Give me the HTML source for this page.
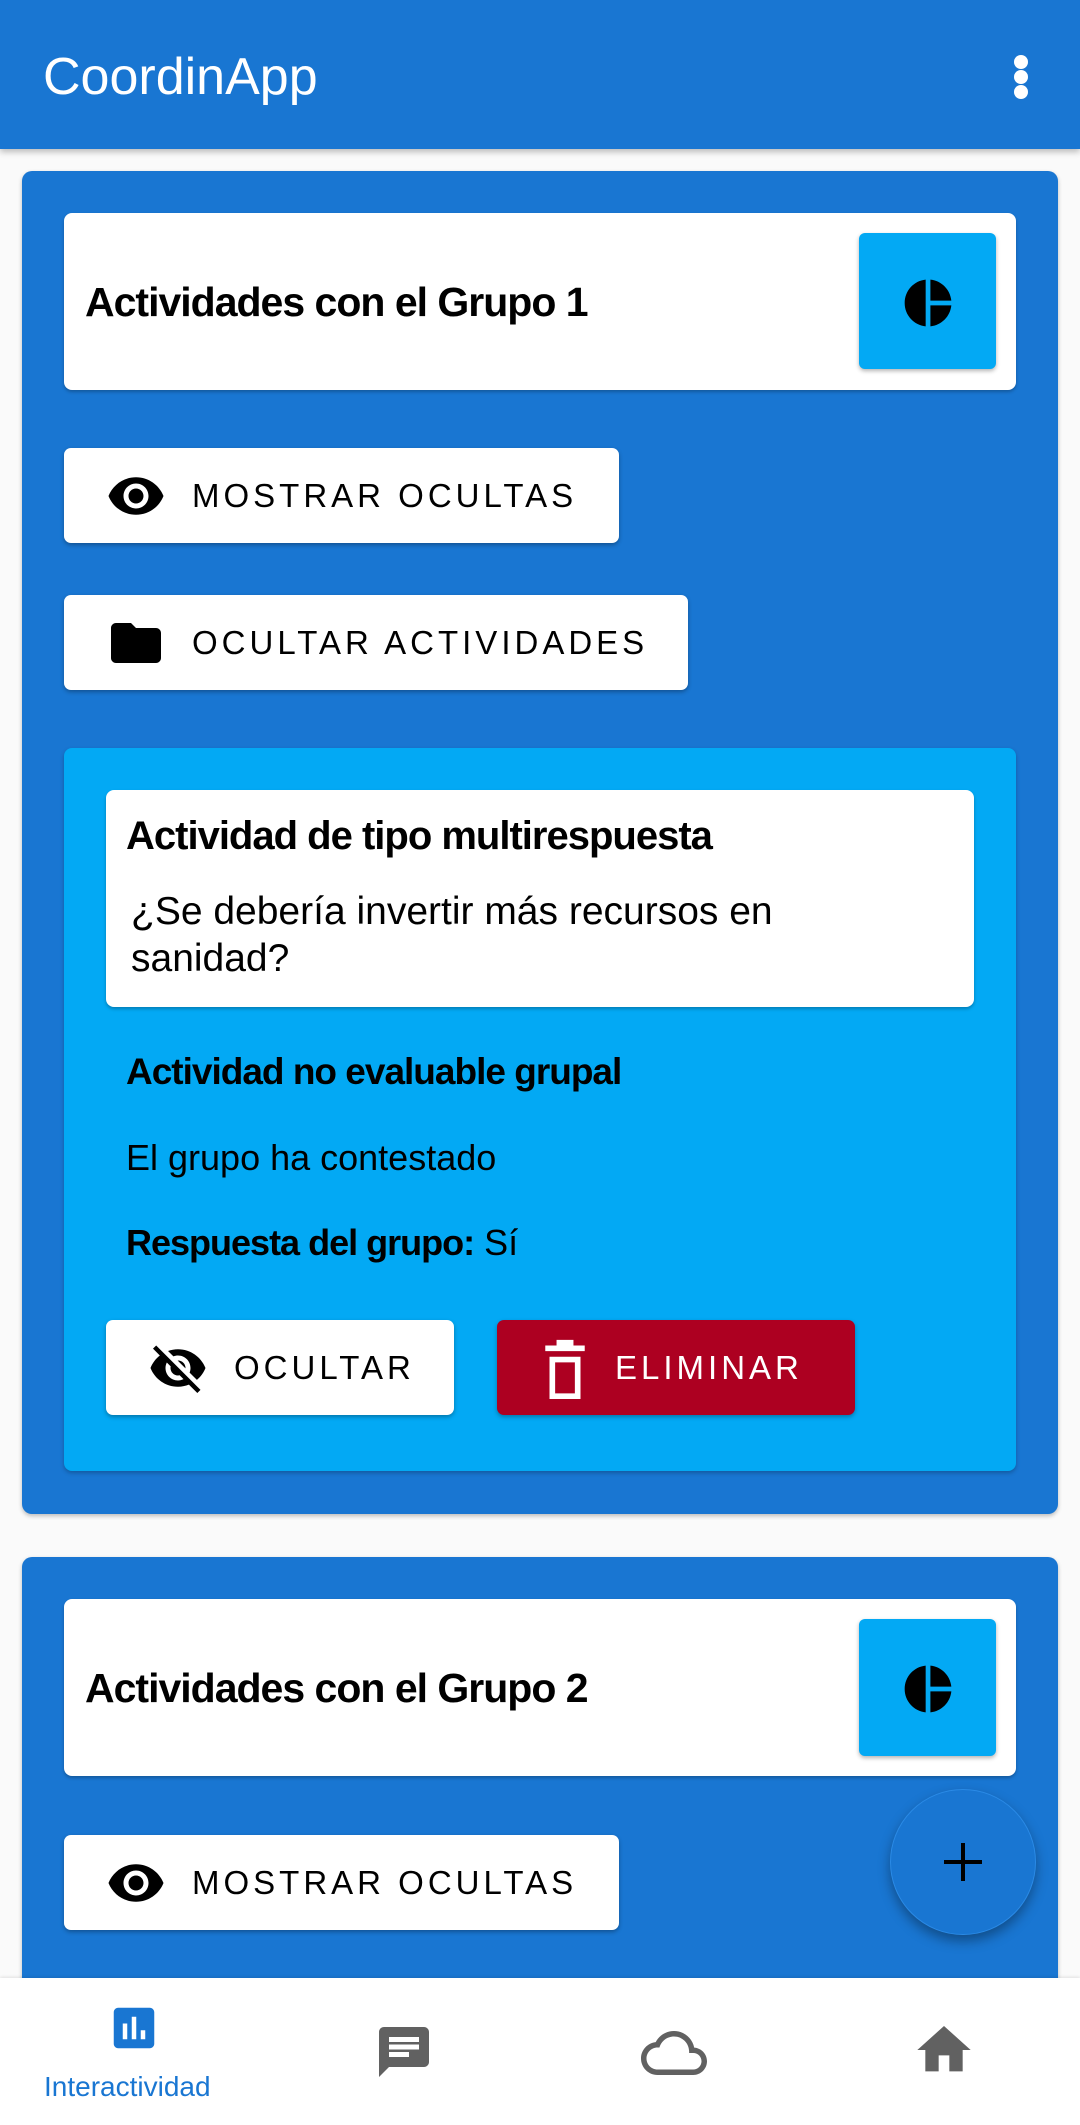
<!DOCTYPE html>
<html style="overflow:hidden;height:2125px"><head><meta charset="utf-8"><style>
*{margin:0;padding:0;box-sizing:border-box}
body{width:1080px;height:2125px;background:#fafafa;font-family:"Liberation Sans",sans-serif;position:relative;overflow:hidden;color:#000}
.a{position:absolute}
.bar{left:0;top:0;width:1080px;height:149px;background:#1976D2;box-shadow:0 3px 6px rgba(0,0,0,.25)}
.card{background:#1976D2;border-radius:10px;box-shadow:0 2px 4px rgba(0,0,0,.25)}
.white{background:#fff;border-radius:8px;box-shadow:0 2px 3px rgba(0,0,0,.25)}
.sq{background:#03A9F4;border-radius:6px;box-shadow:0 2px 4px rgba(0,0,0,.3)}
.btn{background:#fff;border-radius:7px;box-shadow:0 2px 4px rgba(0,0,0,.3);display:flex;align-items:center;font-size:33px;letter-spacing:4px}
.t{white-space:nowrap}
</style></head><body>
<div class="a bar"></div>
<div class="a t" style="left:43px;top:47px;font-size:52px;color:#fff;line-height:60px">CoordinApp</div>
<div class="a" style="left:1014px;top:55px;width:14px;height:14px;border-radius:50%;background:#fff"></div>
<div class="a" style="left:1014px;top:70px;width:14px;height:14px;border-radius:50%;background:#fff"></div>
<div class="a" style="left:1014px;top:85px;width:14px;height:14px;border-radius:50%;background:#fff"></div>

<!-- card 1 -->
<div class="a card" style="left:22px;top:171px;width:1036px;height:1343px"></div>
<div class="a white" style="left:64px;top:213px;width:952px;height:177px"></div>
<div class="a t" style="left:85px;top:280px;font-size:41px;font-weight:bold;line-height:44px;letter-spacing:-1px">Actividades con el Grupo 1</div>
<div class="a sq" style="left:859px;top:233px;width:137px;height:136px"></div>
<svg class="a" style="left:900px;top:275px" width="56" height="56" viewBox="0 0 24 24"><path d="M11 2v20c-5.07-.5-9-4.79-9-10s3.93-9.5 9-10zm2.03 0v8.99H22c-.47-4.74-4.24-8.52-8.97-8.99zm0 11.01V22c4.74-.47 8.5-4.25 8.97-8.99h-8.97z"/></svg>

<div class="a btn" style="left:64px;top:448px;width:555px;height:95px"><svg style="margin-left:42px;margin-right:26px" width="60" height="60" viewBox="0 0 24 24"><path d="M12 4.5C7 4.5 2.730 7.61 1 12c1.73 4.39 6 7.5 11 7.5s9.27-3.11 11-7.5c-1.73-4.390-6-7.5-11-7.5zM12 17c-2.76 0-5-2.24-5-5s2.24-5 5-5 5 2.24 5 5-2.24 5-5 5zm0-8c-1.66 0-3 1.34-3 3s1.34 3 3 3 3-1.34 3-3-1.34-3-3-3z"/></svg>MOSTRAR OCULTAS</div>
<div class="a btn" style="left:64px;top:595px;width:624px;height:95px"><svg style="margin-left:42px;margin-right:26px" width="60" height="60" viewBox="0 0 24 24"><path d="M10 4H4c-1.1 0-2 .9-2 2v12c0 1.1.9 2 2 2h16c1.1 0 2-.9 2-2V8c0-1.1-.9-2-2-2h-8l-2-2z"/></svg>OCULTAR ACTIVIDADES</div>

<div class="a" style="left:64px;top:748px;width:952px;height:723px;background:#03A9F4;border-radius:8px;box-shadow:0 2px 4px rgba(0,0,0,.25)"></div>
<div class="a white" style="left:106px;top:790px;width:868px;height:217px"></div>
<div class="a t" style="left:126px;top:814px;font-size:40px;font-weight:bold;line-height:44px;letter-spacing:-1px">Actividad de tipo multirespuesta</div>
<div class="a" style="left:131px;top:888px;font-size:39px;line-height:47px;width:700px">¿Se debería invertir más recursos en sanidad?</div>
<div class="a t" style="left:126px;top:1050px;font-size:37px;font-weight:bold;line-height:44px;letter-spacing:-1px">Actividad no evaluable grupal</div>
<div class="a t" style="left:126px;top:1136px;font-size:36px;line-height:44px">El grupo ha contestado</div>
<div class="a t" style="left:126px;top:1221px;font-size:36px;line-height:44px"><b style="letter-spacing:-1px">Respuesta del grupo:</b> Sí</div>

<div class="a btn" style="left:106px;top:1320px;width:348px;height:95px"><svg style="margin-left:42px;margin-right:26px" width="60" height="60" viewBox="0 0 24 24"><path d="M12 7c2.76 0 5 2.24 5 5 0 .65-.13 1.26-.36 1.83l2.92 2.92c1.51-1.26 2.7-2.89 3.43-4.750-1.73-4.39-6-7.5-11-7.5-1.4 0-2.74.25-3.98.7l2.16 2.16C10.74 7.13 11.35 7 12 7zM2 4.27l2.28 2.28.46.46C3.08 8.3 1.78 10.02 1 12c1.73 4.39 6 7.5 11 7.5 1.55 0 3.03-.3 4.38-.84l.42.42L19.73 22 21 20.73 3.27 3 2 4.27zM7.53 9.8l1.55 1.55c-.05.21-.08.43-.08.65 0 1.66 1.34 3 3 3 .22 0 .44-.03.65-.08l1.55 1.55c-.67.33-1.41.53-2.2.53-2.76 0-5-2.24-5-5 0-.79.2-1.53.53-2.2zm4.31-.78l3.15 3.15.02-.16c0-1.66-1.34-3-3-3l-.17.01z"/></svg>OCULTAR</div>
<div class="a btn" style="left:497px;top:1320px;width:358px;height:95px;background:#AD0021;color:#fff"><svg style="margin-left:48px;margin-right:30px" width="40" height="62" viewBox="0 0 14 22"><path d="M4 1h6v2h4v2H0V3h4z M1.5 7h11v15h-11z M3.5 9v11h7V9z" fill="#fff" fill-rule="evenodd"/></svg>ELIMINAR</div>

<!-- card 2 -->
<div class="a card" style="left:22px;top:1557px;width:1036px;height:568px;border-radius:10px 10px 0 0"></div>
<div class="a white" style="left:64px;top:1599px;width:952px;height:177px"></div>
<div class="a t" style="left:85px;top:1666px;font-size:41px;font-weight:bold;line-height:44px;letter-spacing:-1px">Actividades con el Grupo 2</div>
<div class="a sq" style="left:859px;top:1619px;width:137px;height:137px"></div>
<svg class="a" style="left:900px;top:1661px" width="56" height="56" viewBox="0 0 24 24"><path d="M11 2v20c-5.07-.5-9-4.79-9-10s3.93-9.5 9-10zm2.03 0v8.99H22c-.47-4.74-4.24-8.52-8.97-8.99zm0 11.01V22c4.74-.47 8.5-4.25 8.97-8.99h-8.97z"/></svg>
<div class="a btn" style="left:64px;top:1835px;width:555px;height:95px"><svg style="margin-left:42px;margin-right:26px" width="60" height="60" viewBox="0 0 24 24"><path d="M12 4.5C7 4.5 2.73 7.61 1 12c1.73 4.39 6 7.5 11 7.5s9.27-3.11 11-7.5c-1.73-4.39-6-7.5-11-7.5zM12 17c-2.76 0-5-2.24-5-5s2.24-5 5-5 5 2.24 5 5-2.24 5-5 5zm0-8c-1.66 0-3 1.34-3 3s1.34 3 3 3 3-1.34 3-3-1.34-3-3-3z"/></svg>MOSTRAR OCULTAS</div>

<!-- FAB -->
<div class="a" style="left:890px;top:1789px;width:146px;height:146px;border-radius:50%;background:#1976D2;border:1px solid #2a8ae6;box-shadow:0 6px 12px rgba(0,0,0,.35)"></div>
<div class="a" style="left:944px;top:1860px;width:38px;height:4px;background:#000"></div>
<div class="a" style="left:961px;top:1843px;width:4px;height:38px;background:#000"></div>

<!-- bottom nav -->
<div class="a" style="left:0;top:1978px;width:1080px;height:147px;background:#fff;box-shadow:0 -1px 3px rgba(0,0,0,.1)"></div>
<svg class="a" style="left:107px;top:2001px" width="54" height="54" viewBox="0 0 24 24"><path fill="#1976D2" d="M19 3H5c-1.1 0-2 .9-2 2v14c0 1.1.9 2 2 2h14c1.1 0 2-.9 2-2V5c0-1.1-.9-2-2-2zM9 17H7v-7h2v7zm4 0h-2V7h2v10zm4 0h-2v-4h2v4z"/></svg>
<div class="a t" style="left:44px;top:2070px;font-size:28px;color:#1976D2;line-height:34px">Interactividad</div>
<svg class="a" style="left:374px;top:2022px" width="60" height="60" viewBox="0 0 24 24"><path fill="#616161" d="M20 2H4c-1.1 0-1.99.9-1.99 2L2 22l4-4h14c1.1 0 2-.9 2-2V4c0-1.1-.9-2-2-2zM6 9h12v2H6V9zm8 5H6v-2h8v2zm4-6H6V6h12v2z"/></svg>
<svg class="a" style="left:641px;top:2020px" width="66" height="66" viewBox="0 0 24 24"><path fill="#616161" d="M19.35 10.04C18.67 6.59 15.64 4 12 4 9.11 4 6.6 5.64 5.35 8.04 2.34 8.36 0 10.91 0 14c0 3.31 2.69 6 6 6h13c2.76 0 5-2.24 5-5 0-2.64-2.05-4.78-4.65-4.96zM19 18H6c-2.21 0-4-1.79-4-4s1.79-4 4-4h.71C7.37 7.69 9.48 6 12 6c3.04 0 5.5 2.46 5.5 5.5v.5H19c1.660 0 3 1.34 3 3s-1.34 3-3 3z"/></svg>
<svg class="a" style="left:912px;top:2018px" width="64" height="64" viewBox="0 0 24 24"><path fill="#616161" d="M10 20v-6h4v6h5v-8h3L12 3 2 12h3v8z"/></svg>
</body></html>
